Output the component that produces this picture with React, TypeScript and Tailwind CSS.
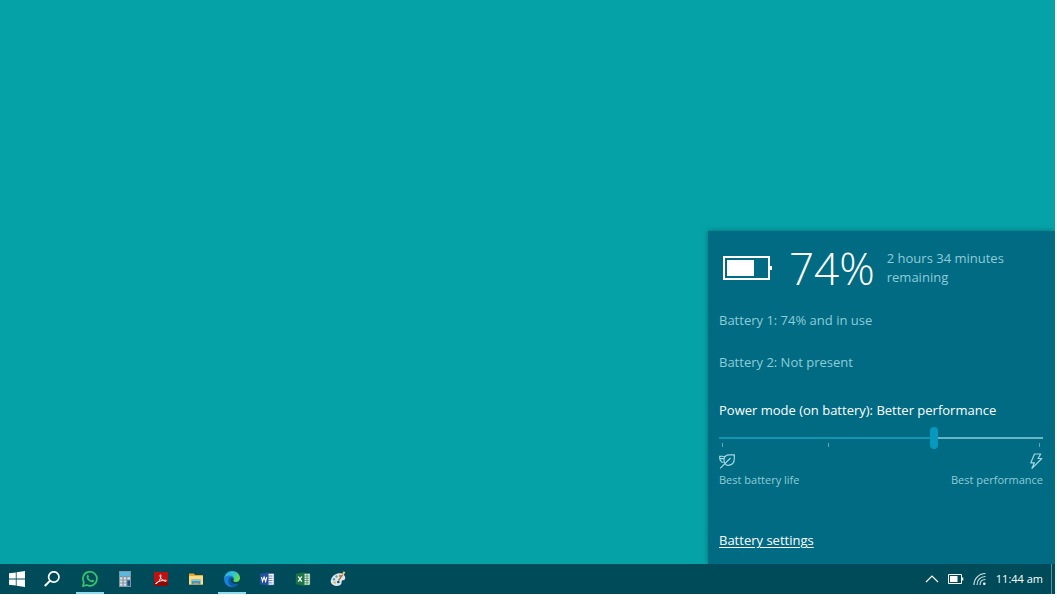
import React, { useState } from 'react';

const WindowsIcon = () => (
  <svg viewBox="0 0 16 16" className="h-4 w-4" fill="#fff">
    <path d="M0 2.3 6.8 1.4v6.2H0zM7.6 1.3 16 .1v7.5H7.6zM0 8.4h6.8v6.2L0 13.7zM7.6 8.4H16v7.5l-8.4-1.2z" />
  </svg>
);

const SearchIcon = () => (
  <svg viewBox="0 0 16 16" className="h-4 w-4" fill="none" stroke="#fff" strokeWidth="1.7">
    <circle cx="9.8" cy="6" r="5.2" />
    <path d="M6.2 9.6.8 15" strokeWidth="2" />
  </svg>
);

const WhatsAppIcon = () => (
  <svg viewBox="0 0 16 16" className="h-4 w-4" fill="none" stroke="#35c66b">
    <path d="M.9 15.100l1-3.8A7 7 0 1 1 4.800 14z" strokeWidth="1.700" strokeLinejoin="round" />
    <path
      d="M5.2 4.2c.5-.5 1-.4 1.2 0l.6 1.4c.1.3-.5.8-.6 1.1.5 1.2 1.6 2.2 2.8 2.7.4 0 .9-.9 1.2-.8l1.5.8c.4.2.1 1.1-.5 1.5-1.2.9-3.2.2-4.9-1.3S3.8 5.7 5.2 4.2z"
      fill="#35c66b"
      stroke="none"
    />
  </svg>
);

const CalculatorIcon = () => (
  <svg viewBox="0 0 16 16" className="h-4 w-4">
    <path fill="#8295a3" d="M2 0h12v16H2z" />
    <path fill="#58b9dc" d="M3 1h10v4H3z" />
    <path fill="#d3e0e8" d="M3 6.200h2.500v2.200H3zM6.700 6.200h2.500v2.200H6.700zM10.400 6.200H13v2.200h-2.600zM3 9.400h2.500v2.200H3zM6.700 9.400h2.500v2.200H6.700zM3 12.600h2.500v2.200H3zM6.700 12.600h2.500v2.200H6.700z" />
    <path fill="#174f80" d="M10.400 9.400H13v5.400h-2.600z" />
  </svg>
);

const AcrobatIcon = () => (
  <svg viewBox="0 0 16 16" className="h-4 w-4">
    <path fill="#c01010" d="M1 1h14v14H1z" />
    <path fill="#8e0808" d="M1 11h14v4H1z" />
    <path
      d="M3 12.700c2.600-1.100 4.700-4.800 5-7.800.1-1.500-1.200-1.500-1 0 .4 2.800 2.700 4.900 5.600 5.400 1 .1.900-1 0-1.100-3-.2-6.400.8-9.400 2.700-.8.600-.8 1-.2.800z"
      fill="none"
      stroke="#fff"
      strokeWidth=".9"
    />
  </svg>
);

const FolderIcon = () => (
  <svg viewBox="0 0 16 16" className="h-4 w-4">
    <path fill="#e8a92c" d="M1 2.500h5l1 1.500h8v9.500H1z" />
    <path fill="#ffdc7a" d="M1 5h14v8.500H1z" />
    <path fill="#4596c8" d="M3.500 8.500h9v5h-9z" />
    <path fill="#8cc8e8" d="M3.500 8.500h9V10h-9z" />
    <path fill="#c3a252" d="M5.500 11.800h5v1.700h-5z" />
  </svg>
);

const EdgeIcon = () => (
  <svg viewBox="0 0 16 16" className="h-4 w-4">
    <defs>
      <linearGradient id="edgeTop" x1="0" y1="0" x2="1" y2=".5">
        <stop offset="0" stopColor="#25a9e8" />
        <stop offset=".55" stopColor="#2fc2d6" />
        <stop offset="1" stopColor="#68dc55" />
      </linearGradient>
    </defs>
    <path fill="#1b80d8" d="M.1 8C.1 4.800 3.400 3.600 5.800 4c2 .3 3.300 1.600 3.700 3.200C8 6.800 6.500 8.200 6.700 10c.3 3 4.200 4.300 7.500 3-1.500 2-3.600 3-6.200 3C3.500 16 .1 12.500.1 8z" />
    <path fill="#0f59ac" d="M4.300 9.500c0-2.200 1.400-3.700 3.200-3.600 1 0 1.700.6 2 1.300C8 6.800 6.500 8.200 6.700 10c.3 3 4.200 4.300 7.500 3-1 1.500-2.700 2.500-4.500 2.800-3.200-.2-5.400-3-5.400-6.300z" />
    <path fill="url(#edgeTop)" d="M.1 7.500C.5 3.200 3.800 0 8 0c4.700 0 8 3.300 8 6.900 0 2.600-2 4-4.200 4-1.600 0-2.700-.6-2.500-1.100.2-.4.600-.8.600-1.700 0-2-2-3.600-4.600-3.600C2.900 4.500.9 5.700.1 7.500z" />
  </svg>
);

const WordIcon = () => (
  <svg viewBox="0 0 16 16" className="h-4 w-4">
    <path fill="#fff" stroke="#3a62a8" strokeWidth=".6" d="M8 2.500h7v11.500H8z" />
    <path stroke="#3a62a8" d="M9 5h4.500M9 7.300h4.500M9 9.600h4.500M9 11.900h4.500" strokeWidth=".8" />
    <path fill="#244f9b" d="M.8 2.800l8.700-1.500v13.500L.8 13.300z" />
    <path fill="none" stroke="#fff" strokeWidth="1.100" d="M2.500 6l1 4.300L5.100 6l1.500 4.300L7.800 6" />
  </svg>
);

const ExcelIcon = () => (
  <svg viewBox="0 0 16 16" className="h-4 w-4">
    <path fill="#e9f5ed" stroke="#26794a" strokeWidth=".6" d="M8 2.500h7v11.500H8z" />
    <path stroke="#26794a" d="M9 5h5M9 7.300h5M9 9.600h5M9 11.900h5M12 3v10.500" strokeWidth=".7" />
    <path fill="#1d7444" d="M.8 2.800l8.700-1.500v13.500L.8 13.300z" />
    <path stroke="#fff" strokeWidth="1.300" d="M3.300 5.500l3.500 5.100M6.800 5.500l-3.500 5.100" />
  </svg>
);

const PaintIcon = () => (
  <svg viewBox="0 0 16 16" className="h-4 w-4">
    <path
      fill="#dde8ee"
      d="M7.500 2.500C11.500 1.500 15.500 3.500 15.200 7.500 15 9.300 13.200 9 12.200 9.500c-1.200.6 0 2-1 3.400-2 2.500-5.700 2.500-8.400.8C1 12.500.3 10.700.9 9 1.700 5.700 4.200 3.300 7.500 2.500z"
    />
    <circle cx="4" cy="8.300" r="1.200" fill="#5b9bcf" />
    <circle cx="6.500" cy="5.500" r="1.200" fill="#6cab70" />
    <circle cx="10" cy="4.900" r="1.100" fill="#d96f5c" />
    <circle cx="4.800" cy="11.500" r="1.200" fill="#e0b950" />
    <circle cx="8.300" cy="11" r="1.300" fill="#14566a" />
    <path stroke="#a9673c" strokeWidth="1.300" d="M8.500 9.500 13 3.200" />
    <path stroke="#f0c27c" strokeWidth="2" d="M12.600 4 14.500.8" />
  </svg>
);

const LeafIcon = () => (
  <svg viewBox="0 0 16 16" className="h-4 w-4" fill="none" stroke="currentColor" strokeWidth="1.200">
    <path d="M15.300 1.800H10.500C7.300 1.800 5 3.800 5 7c0 1.800.5 3 1.300 4C7 12 8.300 12.500 9.500 12.300c3.700-.4 5.800-2.600 5.800-6.500z" />
    <path d="M11.500 5 1.200 15.300" />
    <path d="M5.700 3.600C4 3.100 2.500 3.300.7 3.300.4 6 1.500 9.500 4.500 9.500M.7 5.600h4.200" />
  </svg>
);

const BoltIcon = () => (
  <svg viewBox="0 0 16 16" className="h-4 w-4" fill="none" stroke="currentColor" strokeWidth="1.200">
    <path d="M7.500 1h6.200L11 5.500h3.800L5 15.300 7.400 9.800H3.800z" strokeLinejoin="round" />
  </svg>
);

const BatteryIcon = () => (
  <svg viewBox="0 0 50 24" className="h-6 w-[50px] shrink-0">
    <path fill="none" stroke="#fff" strokeWidth="2" d="M1 1h45v22H1z" />
    <path fill="#fff" d="M4 4h27v16H4zM47 10h2v4h-2z" />
  </svg>
);

const apps = [
  { name: 'WhatsApp', icon: WhatsAppIcon, open: true },
  { name: 'Calculator', icon: CalculatorIcon, open: false },
  { name: 'Acrobat Reader', icon: AcrobatIcon, open: false },
  { name: 'File Explorer', icon: FolderIcon, open: false },
  { name: 'Edge', icon: EdgeIcon, open: true },
  { name: 'Word', icon: WordIcon, open: false },
  { name: 'Excel', icon: ExcelIcon, open: false },
  { name: 'Paint', icon: PaintIcon, open: false },
];

const modes = ['Battery saver', 'Better battery', 'Better performance', 'Best performance'];

const BatteryPanel: React.FC = () => {
  const [mode, setMode] = useState(2);
  const fill = (mode / (modes.length - 1)) * 100;

  return (
    <section className="w-[347px] bg-[#006b83] pt-4 pr-3 pb-[14px] pl-[11px] text-[13px] leading-5 text-[#8fcbd8] shadow-[0_0_5px_rgba(0,60,70,0.5)]">
      <div className="flex h-[42px] items-center pl-1">
        <BatteryIcon />
        <span className="ml-4 text-[44px] leading-none font-light text-white">74%</span>
        <p className="ml-3 w-32 leading-[19px]">2 hours 34 minutes remaining</p>
      </div>

      <p className="mt-[21px]">Battery 1: 74% and in use</p>
      <p className="mt-[22px]">Battery 2: Not present</p>

      <label htmlFor="power-mode" className="mt-7 block text-white">
        Power mode (on battery): {modes[mode]}
      </label>
      <div className="relative mt-[7px] h-[22px]">
        <div className="absolute inset-x-[3px] top-4 flex h-1 justify-between">
          {modes.map((m) => (
            <span key={m} className="w-px bg-[#5fa9ba]" />
          ))}
        </div>
        <input
          id="power-mode"
          type="range"
          min={0}
          max={modes.length - 1}
          value={mode}
          onChange={(e) => setMode(Number(e.target.value))}
          className="relative block h-[22px] w-full appearance-none bg-[length:100%_2px] bg-center bg-no-repeat [&::-webkit-slider-thumb]:h-[22px] [&::-webkit-slider-thumb]:w-2 [&::-webkit-slider-thumb]:appearance-none [&::-webkit-slider-thumb]:rounded [&::-webkit-slider-thumb]:bg-[#0799bd]"
          style={{ backgroundImage: `linear-gradient(to right, #1495b0 ${fill}%, #69b5c5 ${fill}%)` }}
        />
      </div>
      <div className="mt-1 flex justify-between text-[#a2d8e2]">
        <LeafIcon />
        <BoltIcon />
      </div>
      <div className="mt-[3px] flex justify-between text-[11px] leading-4">
        <span>Best battery life</span>
        <span>Best performance</span>
      </div>

      <a href="#battery-settings" className="mt-[42px] block w-fit text-white underline underline-offset-2">
        Battery settings
      </a>
    </section>
  );
};

const Taskbar: React.FC = () => (
  <footer className="flex h-[30px] items-stretch bg-[#004b5a] text-white">
    <button aria-label="Start" className="flex w-[34px] items-center justify-center">
      <WindowsIcon />
    </button>
    <button aria-label="Search" className="flex w-9 items-center justify-center">
      <SearchIcon />
    </button>
    <nav className="ml-[6px] flex w-[276px] justify-between">
      {apps.map((app) => (
        <button
          key={app.name}
          aria-label={app.name}
          className={`flex w-7 items-center justify-center border-b-2 pt-[2px] ${app.open ? 'border-[#8fdcf0]' : 'border-transparent'}`}
        >
          <app.icon />
        </button>
      ))}
    </nav>

    <div className="ml-auto flex items-center">
      <button aria-label="Show hidden icons">
        <svg viewBox="0 0 14 8" className="h-2 w-[14px]" fill="none" stroke="#fff" strokeWidth="1.200">
          <path d="M1 7l6-6 6 6" />
        </svg>
      </button>
      <button aria-label="Battery" className="ml-[9px]">
        <svg viewBox="0 0 16 10" className="h-[10px] w-4">
          <path fill="none" stroke="#fff" d="M.5.500h13v9H.5z" />
          <path fill="#fff" d="M2 2h7.500v6H2zM14 3.500h1.300v3H14z" />
        </svg>
      </button>
      <button aria-label="Network" className="ml-[9px]">
        <svg viewBox="0 0 14 14" className="h-[14px] w-[14px]" fill="none" stroke="#d5e6ea" strokeWidth="1.100">
          <path d="M1 13C1 6.500 6 1.500 12.500 1.500M4 13c0-5 3.500-8.500 8.500-8.500M7 13c0-3.300 2.200-5.500 5.500-5.500" />
          <circle cx="11.300" cy="11.800" r="1.300" fill="#fff" stroke="none" />
        </svg>
      </button>
      <time className="ml-[9px] text-[11px]">11:44 am</time>
      <button aria-label="Show desktop" className="ml-2 h-full w-1 border-l border-[#5c909b]" />
    </div>
  </footer>
);

export default function App() {
  return (
    <div className="h-screen bg-white pr-[2px] pb-[6px] font-['Open_Sans','Noto_Sans',sans-serif]">
      <div className="flex h-full flex-col">
        <main className="flex flex-1 items-end justify-end overflow-hidden bg-[#05a3a8]">
          <BatteryPanel />
        </main>
        <Taskbar />
      </div>
    </div>
  );
}
